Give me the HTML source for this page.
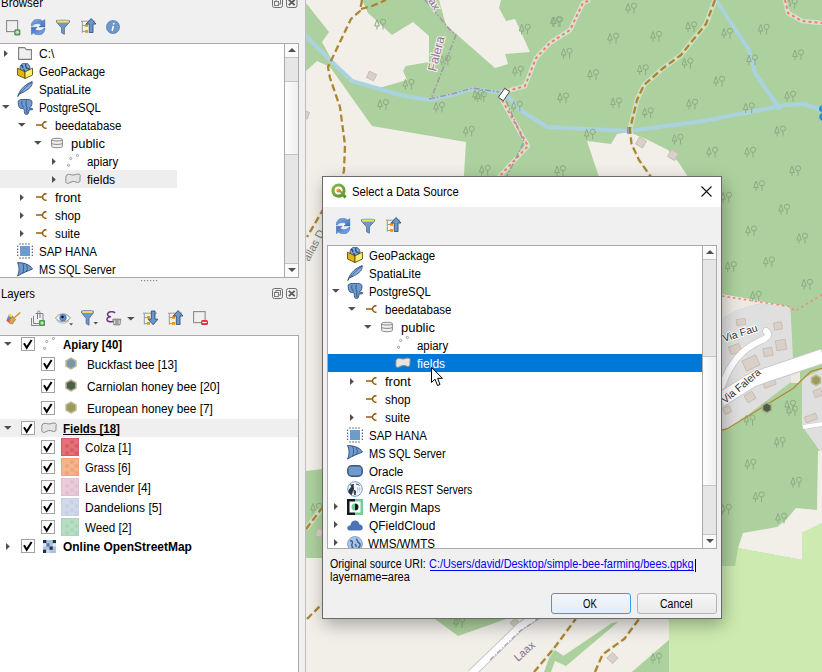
<!DOCTYPE html>
<html><head><meta charset="utf-8">
<style>
*{box-sizing:border-box}
html,body{margin:0;padding:0}
body{width:822px;height:672px;overflow:hidden;position:relative;background:#f0f0f0;font-family:"Liberation Sans",sans-serif;font-size:12px;color:#000}
.a{position:absolute}
.t{position:absolute;white-space:pre;line-height:18px;height:18px;transform-origin:0 0}
svg{position:absolute;overflow:visible}
</style></head><body>

<svg width="0" height="0" style="position:absolute;left:0;top:0">
<defs>
<symbol id="tr" viewBox="0 0 4 7"><path d="M0,0 L3.8,3.5 L0,7 Z" fill="#4f4f4f"/></symbol>
<symbol id="td" viewBox="0 0 8 4"><path d="M0,0 L7.6,0 L3.8,3.8 Z" fill="#4f4f4f"/></symbol>

<symbol id="folder" viewBox="0 0 14 13"><path d="M0.6,0.6 H6.6 L8.4,2.6 H13.4 V12.4 H0.6 Z" fill="#efefef" stroke="#7c7c7c" stroke-width="1.1" stroke-linejoin="round"/></symbol>

<symbol id="gpkg" viewBox="0 0 16 16">
<circle cx="8" cy="5" r="5" fill="#7ea6d6" stroke="#2f4f7a" stroke-width="0.8"/>
<path d="M3.8,2.8 C5.5,2 6.5,4 5.3,5.2 M8.5,0.8 C9.2,2.5 8,3.5 9.5,5 C10.5,6 11.8,5.6 12.6,6.5 M6,6.8 C7,6.3 8,7 7.6,8.5" fill="none" stroke="#2e4d78" stroke-width="1.4"/>
<path d="M0.5,5.2 L8,8.8 L8,15.5 L0.5,12 Z" fill="#e4b60c" stroke="#4e3e00" stroke-width="0.8" stroke-linejoin="round"/>
<path d="M8,8.8 L15.5,5.2 L15.5,12 L8,15.5 Z" fill="#f8f06c" stroke="#4e3e00" stroke-width="0.8" stroke-linejoin="round"/>
</symbol>

<symbol id="feather" viewBox="0 0 16 16">
<path d="M0.8,15.6 C2,11 5.5,4.5 15.2,0.6 C15.4,3.5 14.5,5.5 12,7.5 C9,10 6,11.5 2.5,12.8 Z" fill="#86aee0" stroke="#2f4d76" stroke-width="0.9" stroke-linejoin="round"/>
<path d="M2.5,12.8 C6,9 10,5 15,1" fill="none" stroke="#2f4d76" stroke-width="0.8"/>
</symbol>

<symbol id="pg" viewBox="0 0 16 16">
<path d="M1.2,3.5 C1,1 3,0.4 5.5,0.5 L10.5,0.5 C13,0.4 15.2,1 15,3.8 C14.8,6.5 14,8 12.5,8.6 L12.4,9.2 L15.4,9.4 L15.4,10.8 L12.2,10.8 C12,13 11.4,15.6 9.5,15.6 C7.6,15.6 7.2,13 7.3,10.8 C6.5,9.5 5.5,9.3 4.2,9.4 C2,9.3 1.4,6.5 1.2,3.5 Z" fill="#6f9bd2" stroke="#2f4f78" stroke-width="0.9" stroke-linejoin="round"/>
<path d="M5.2,1.8 C4.2,3.5 4.5,6.5 6.8,8.6 M9.4,1.6 C8.8,4 8.6,6 10,8.2 C9.6,10 9.6,12 10,14.5" fill="none" stroke="#2f4f78" stroke-width="0.9"/>
</symbol>

<symbol id="schema" viewBox="0 0 11 8"><path d="M0,4 H6 M10.5,0.6 C8.5,0.6 6.5,2 6.5,4 C6.5,6 8.5,7.4 10.5,7.4" fill="none" stroke="#9b5c0c" stroke-width="1.6"/></symbol>

<symbol id="db" viewBox="0 0 12 12">
<path d="M0.6,2.6 C0.6,0.8 11.4,0.8 11.4,2.6 V9.4 C11.4,11.2 0.6,11.2 0.6,9.4 Z" fill="#f0f0f0" stroke="#8a8a8a" stroke-width="1"/>
<path d="M0.6,2.8 C0.6,4.4 11.4,4.4 11.4,2.8 M0.6,6.2 C0.6,7.8 11.4,7.8 11.4,6.2" fill="none" stroke="#8a8a8a" stroke-width="1"/>
</symbol>

<symbol id="pts" viewBox="0 0 12 13"><g fill="#fff" stroke="#8a8a8a" stroke-width="0.8"><circle cx="1.6" cy="11.3" r="1.1"/><circle cx="3.7" cy="4.5" r="1.1"/><circle cx="10.4" cy="1.5" r="1.1"/></g></symbol>

<symbol id="poly" viewBox="0 0 16 11"><path d="M1.8,2 C3.5,0.4 6,2 8,2 C10,2 12.5,0.2 14.6,1.4 C16,2.4 14.6,4.6 15,7 C15.4,9.4 13.2,10.2 11,9 C9,8 6.5,8.6 4.2,10 C1.6,11.2 0.4,9.4 0.8,7.2 C1.2,5 0.2,3.4 1.8,2 Z" fill="#e4e4e4" stroke="#888" stroke-width="1"/></symbol>

<symbol id="hana" viewBox="0 0 16 16">
<rect x="3" y="3" width="10" height="10" fill="#6d9bcb"/>
<g fill="#2d4868"><circle cx="3" cy="1" r=".7"/><circle cx="6" cy="1" r=".7"/><circle cx="9" cy="1" r=".7"/><circle cx="12" cy="1" r=".7"/>
<circle cx="3" cy="15" r=".7"/><circle cx="6" cy="15" r=".7"/><circle cx="9" cy="15" r=".7"/><circle cx="12" cy="15" r=".7"/>
<circle cx="0.7" cy="3.3" r=".7"/><circle cx="0.7" cy="6.3" r=".7"/><circle cx="0.7" cy="9.3" r=".7"/><circle cx="0.7" cy="12.3" r=".7"/>
<circle cx="15.3" cy="3.3" r=".7"/><circle cx="15.3" cy="6.3" r=".7"/><circle cx="15.3" cy="9.3" r=".7"/><circle cx="15.3" cy="12.3" r=".7"/></g>
</symbol>

<symbol id="mssql" viewBox="0 0 16 15">
<path d="M0.5,0.6 C6,0.4 13,2.5 15.5,7 C11,9 5,11 0.5,14 C2.5,10 2.5,4.5 0.5,0.6 Z" fill="#6f9bd0" stroke="#2f4d76" stroke-width="0.9" stroke-linejoin="round"/>
<path d="M5.5,1.2 C7,4 7,8 5.5,11.5 M9.5,2.5 C10.5,5 10.5,7 9.5,9.5" fill="none" stroke="#2f4d76" stroke-width="0.8"/>
</symbol>

<symbol id="oracle" viewBox="0 0 16 12"><rect x="0.8" y="0.8" width="14.4" height="10.4" rx="4" fill="#6d9bcb" stroke="#38577c" stroke-width="1.5"/></symbol>

<symbol id="arcgis" viewBox="0 0 16 16">
<circle cx="8" cy="8" r="7.3" fill="#f4f8fc" stroke="#5c8fd0" stroke-width="0.9"/>
<path d="M3,4 C4,3.5 5,4.5 4.5,6 L2,9 C1.5,11 2.5,13 4.5,13.5 C5,11 6.5,10 6.5,8 C7,6 5.5,5 6.5,3 M7.5,9 C8.5,10 9,11.5 8,14 C7,12.5 7,11 7.5,9 M9,3 C10.5,3.5 11,3 12.5,4.5" fill="#2b3340" stroke="#2b3340" stroke-width="0.9"/>
<path d="M10.5,6 V12 M12.5,6 V11 M10,8 H14" stroke="#9db8e0" stroke-width="0.6"/>
</symbol>

<symbol id="mergin" viewBox="0 0 16 16">
<path d="M8,0 H0 V16 H8 V13.5 H2.5 V2.5 H8 Z" fill="#12181f"/>
<path d="M8,0 H16 V16 H8 V13.5 H13.5 V2.5 H8 Z" fill="#6fcf97"/>
<path d="M8,4.5 A3.5,3.5 0 0 0 8,11.5 Z" fill="#6fcf97"/>
<path d="M8,4.5 A3.5,3.5 0 0 1 8,11.5 Z" fill="#12181f"/>
</symbol>

<symbol id="cloud" viewBox="0 0 16 11"><path d="M3,10.6 C0.6,10.6 0,8.6 0.4,7.4 C0.9,5.8 2.2,5.3 3.4,5.5 C3.6,2.2 6,0.3 8.4,0.4 C10.8,0.5 12.3,2.4 12.6,4.6 C14.6,4.7 15.8,6.2 15.8,7.8 C15.8,9.6 14.4,10.6 12.8,10.6 Z" fill="#4a73b9"/></symbol>

<symbol id="wms" viewBox="0 0 16 16">
<circle cx="8" cy="8" r="7.5" fill="#a9c5e8" stroke="#5a7fae" stroke-width="0.6"/>
<path d="M3,5 C5,4 6,6 5,8 C4,10 6,12 7,14 M9,3 C11,4 10,6 12,7 C14,8 13,11 11,12 M8,8 C9,9 9.5,10 9,11" fill="none" stroke="#3b5f8e" stroke-width="1.4"/>
</symbol>

<symbol id="chk" viewBox="0 0 14 14">
<rect x="0.5" y="0.5" width="13" height="13" fill="#fff" stroke="#a3a3a3" stroke-width="1"/>
<path d="M3,6.3 L5.7,10.8 L10.6,3" fill="none" stroke="#000" stroke-width="2" stroke-linejoin="miter"/>
</symbol>

<symbol id="hex" viewBox="0 0 12 13"><path d="M6,0.3 L11.7,3.4 L11.7,9.6 L6,12.7 L0.3,9.6 L0.3,3.4 Z"/></symbol>

<symbol id="osm" viewBox="0 0 13 13">
<rect width="13" height="13" fill="#a9c3e0"/>
<rect x="0" y="0" width="3.25" height="3.25" fill="#1f3247"/><rect x="9.75" y="0" width="3.25" height="3.25" fill="#1f3247"/>
<rect x="3.25" y="3.25" width="3.25" height="3.25" fill="#5c7896"/><rect x="6.5" y="6.5" width="3.25" height="3.25" fill="#1f3247"/>
<rect x="0" y="9.75" width="3.25" height="3.25" fill="#1f3247"/><rect x="3.25" y="9.75" width="3.25" height="3.25" fill="#cfdcec"/>
<rect x="9.75" y="3.25" width="3.25" height="3.25" fill="#dde7f2"/><rect x="0" y="3.25" width="3.25" height="3.25" fill="#dde7f2"/>
</symbol>

<symbol id="refresh" viewBox="0 0 15 16">
<defs><linearGradient id="rg1" x1="0" y1="0" x2="1" y2="1"><stop offset="0" stop-color="#86b0e4"/><stop offset="1" stop-color="#3c6fc2"/></linearGradient></defs>
<path d="M0.2,7 C0.4,3 3,0.2 6.5,0.2 C9,0.2 10.6,1 11.6,2.1 L13.8,0.6 L13.9,7.9 L8,7.9 L10.1,5.9 C9.2,5 8,4.5 6.5,4.5 C4,4.5 2.4,5.6 1.2,7 Z" fill="url(#rg1)" stroke="#3a68b0" stroke-width="0.5"/>
<path d="M0.2,7 C0.4,3 3,0.2 6.5,0.2 C9,0.2 10.6,1 11.6,2.1 L13.8,0.6 L13.9,7.9 L8,7.9 L10.1,5.9 C9.2,5 8,4.5 6.5,4.5 C4,4.5 2.4,5.6 1.2,7 Z" fill="url(#rg1)" stroke="#3a68b0" stroke-width="0.5" transform="rotate(180 7.1 8.1)"/>
</symbol>

<symbol id="funnel" viewBox="0 0 15 16">
<path d="M0.6,1.2 C0.6,0.6 14.4,0.6 14.4,1.2 L14.4,2.8 L9,9 L9,15.8 L6,14.2 L6,9 L0.6,2.8 Z" fill="#6f97c7" stroke="#44648c" stroke-width="0.8" stroke-linejoin="round"/>
<rect x="1.2" y="1" width="12.6" height="2.3" fill="#f4e35a"/>
</symbol>

<symbol id="collapse" viewBox="0 0 16 16">
<path d="M1,4.2 H15 M2.3,4.2 V15.7 M2.3,8.5 H5 M2.3,14.5 H5" fill="none" stroke="#8f8f8f" stroke-width="0.9"/>
<rect x="5" y="7" width="3" height="2.8" fill="#f39412"/><rect x="5" y="13" width="3" height="2.8" fill="#f39412"/>
<path d="M11.1,1.5 L16,7 L13,7 L13,15.7 L9.3,15.7 L9.3,7 L6.2,7 Z" fill="#6d97c8" stroke="#2f4e78" stroke-width="0.9" stroke-linejoin="round"/>
</symbol>
<symbol id="expand" viewBox="0 0 16 16">
<path d="M1,4.2 H15 M2.3,4.2 V15.7 M2.3,8.5 H5 M2.3,14.5 H5" fill="none" stroke="#8f8f8f" stroke-width="0.9"/>
<rect x="5" y="7" width="3" height="2.8" fill="#f39412"/><rect x="5" y="13" width="3" height="2.8" fill="#f39412"/>
<path d="M11.1,15.7 L16,10.2 L13,10.2 L13,2 L9.3,2 L9.3,10.2 L6.2,10.2 Z" fill="#6d97c8" stroke="#2f4e78" stroke-width="0.9" stroke-linejoin="round"/>
</symbol>

<symbol id="addsel" viewBox="0 0 15 16">
<rect x="0.6" y="0.6" width="11" height="11" fill="none" stroke="#8a8a8a" stroke-width="1.1"/>
<rect x="8.2" y="9.2" width="6.2" height="6.2" rx="1.5" fill="#4c9a4c"/><circle cx="11.3" cy="12.3" r="1.8" fill="#c8dcc8"/>
</symbol>
<symbol id="remove" viewBox="0 0 15 14">
<rect x="0.6" y="0.6" width="11.5" height="11" fill="none" stroke="#8a8a8a" stroke-width="1.1"/>
<rect x="8" y="9" width="7" height="5" rx="1.5" fill="#e3303c"/><rect x="9.3" y="10.9" width="4.4" height="1.2" fill="#fff"/>
</symbol>
<symbol id="info" viewBox="0 0 14 14">
<circle cx="7" cy="7" r="6.6" fill="#6b97c9" stroke="#4f79aa" stroke-width="0.6"/>
<path d="M7.3,5.8 L6.2,11" stroke="#fff" stroke-width="1.5"/><circle cx="7.7" cy="3.7" r="0.9" fill="#fff"/>
</symbol>

<symbol id="brush" viewBox="0 0 15 13">
<path d="M0.3,9 L3.2,2 L6,3.5 L3,10.5 Z" fill="#e84a4a"/>
<path d="M1.2,6.5 L3.2,2 L7,4 L5,8 Z" fill="#5f8fd0"/>
<path d="M2.2,4 L3.2,1.6 L7,3.5 L6,5.5 Z" fill="#f3de3a"/>
<path d="M3.5,7 L7,4.5 L9.5,7.5 L6.5,12 L3,11 Z" fill="#d6a45a" stroke="#9a6a28" stroke-width="0.6"/>
<path d="M8,6 L14.3,0.5" stroke="#d49a3a" stroke-width="1.6"/>
</symbol>

<symbol id="addgrp" viewBox="0 0 14 16">
<path d="M0.5,8 V15.5 H8 M2.5,6 V13.5 H10 M4.5,3.5 H12 V11.5" fill="none" stroke="#777" stroke-width="0.9"/>
<path d="M6.5,9 V2.5 C6.5,0.5 9,0.5 9,2.5 V8" fill="none" stroke="#5a86c0" stroke-width="1"/>
<rect x="8" y="10" width="6" height="6" rx="1" fill="#4c9a4c"/><circle cx="11" cy="13" r="1.7" fill="#c8dcc8"/>
</symbol>

<symbol id="eye" viewBox="0 0 18 14">
<path d="M0.6,6 C4,0.5 12,0.5 15.4,6 C12,11 4,11 0.6,6 Z" fill="#f3f3f3" stroke="#8c8c8c" stroke-width="0.9"/>
<path d="M1.5,8.5 C5,12 11,12 14,9" fill="none" stroke="#b0b0b0" stroke-width="0.8"/>
<circle cx="8" cy="5.7" r="3.3" fill="#5f8ecf" stroke="#3b5f90" stroke-width="0.6"/><circle cx="7.5" cy="5" r="1.2" fill="#000"/>
<path d="M14.2,11.2 H18 L16.1,13.5 Z" fill="#4f4f4f"/>
</symbol>
<symbol id="funneldd" viewBox="0 0 17 16">
<path d="M0.6,1.2 C0.6,0.6 12.4,0.6 12.4,1.2 L12.4,2.8 L8,8.5 L8,15.2 L5.2,13.6 L5.2,8.5 L0.6,2.8 Z" fill="#6f97c7" stroke="#44648c" stroke-width="0.8" stroke-linejoin="round"/>
<rect x="1.3" y="1.1" width="10.4" height="1.8" fill="#f4e35a"/>
<path d="M12.5,12 H17 L14.75,14.4 Z" fill="#4f4f4f"/>
</symbol>
<symbol id="eps" viewBox="0 0 16 15">
<path d="M8.6,1.6 C7.6,0.4 2.2,0.2 1.6,3 C1.3,4.6 2.6,5.6 5,5.7 C2.4,5.8 0.8,6.8 1,8.6 C1.3,11.2 6.6,11.4 8.8,9.6" fill="none" stroke="#6b3b7e" stroke-width="1.5" stroke-linecap="round"/>
<path d="M6.8,8 H15 L14,14 H7.8 Z" fill="#a0a0a0" stroke="#7a7a7a" stroke-width="0.6"/>
<path d="M8.6,9.5 V13 M13.2,9.5 V13" stroke="#dcdcdc" stroke-width="1"/>
</symbol>

<symbol id="qgis" viewBox="0 0 16 16">
<defs><linearGradient id="qg" x1="0" y1="0" x2="1" y2="1"><stop offset="0" stop-color="#8cc051"/><stop offset="1" stop-color="#4f8a22"/></linearGradient>
<radialGradient id="qo" cx="0.4" cy="0.4" r="0.6"><stop offset="0" stop-color="#ffb347"/><stop offset="1" stop-color="#e8620c"/></radialGradient></defs>
<path d="M7.6,0.4 A7.2,7.2 0 1 0 11.6,13.6 L13.6,15.6 L15.6,13.6 L13.4,11.4 A7.2,7.2 0 0 0 7.6,0.4 Z M7.6,3.6 A4,4 0 1 1 7.6,11.6 A4,4 0 1 1 7.6,3.6 Z" fill="url(#qg)" fill-rule="evenodd"/>
<path d="M7.2,7.8 L13.2,14 L14.8,12.6 L9,6.6 Z" fill="url(#qg)"/>
<circle cx="7.4" cy="7.4" r="2" fill="url(#qo)"/>
</symbol>
</defs></svg>

<svg id="map" class="a" style="left:0;top:0" width="822" height="672" viewBox="0 0 822 672">
<rect x="306" y="0" width="516" height="672" fill="#add19e"/>
<g fill="#f2efe9">
<polygon fill="#f2efe9" points="306,0 362,0 368,13 392,35 413,22 429,36 429,62 406,66 403,71 407,80 379,88 352,80 333,62 322,42 329,32 306,3" />
<polygon fill="#f2efe9" points="306,71 317,61 330,67 372,126 466,142 463,190 322,200 306,200" />
<polygon fill="#f2efe9" points="439,0 501,0 499,8 506,21 515,19 530,52 505,54 508,64 495,68 446,25" />
<polygon fill="#f2efe9" points="587,141 611,144 617,134 629,132 648,140 668,150 679,163 690,180 600,180" />
<polygon fill="#f2efe9" points="306,190 330,190 330,468 306,471" />
<polygon fill="#f2efe9" points="306,558 330,558 330,672 306,672" />
<polygon fill="#f2efe9" points="320,612 680,612 669,640 632,672 320,672" />
<polygon fill="#ece9e3" points="722,294 789,306.5 791,314 786,306.5 759.5,303.6 738.7,309.5 722,318.5" />
<polygon fill="#f2efe9" points="818,451 822,451 822,523 802,533 802,560 738,548 743,533 777,527 786,520 796,508 817,510" />
</g>
<polygon fill="#e0dfdf" points="722,318.5 738.7,309.5 759.5,303.6 786.4,306.5 790.8,314 793,359 791,382 741,420 722,430" />
<polygon fill="#e0dfdf" points="802,379 822,369 822,451 820,451 802,426" />
<polygon fill="#add19e" points="739,420 793,388 802,379 800,420" />
<polygon fill="#e0dfdf" points="722,430 727,430 758,410 741,420" />
<polygon fill="#ece9e2" points="791,369 800,367 800,383 791,383" />
<polygon fill="#cdebb0" points="738,548 802,560 802,533 822,523 822,672 632,672 669,640 669,612 722,612 722,566 735,566" />
<polygon fill="#add19e" points="632,672 669,640 669,672" />
<polygon fill="#add19e" points="544,672 552.6,648.5 563.5,655.8 612,623 618,622 566,666 555,661 551,672" />
<polygon fill="#add19e" points="435,619 506,619 458,636" />
<g fill="#d9d0c9" stroke="#c6b8ac" stroke-width="0.8">
<rect x="367.5" y="72.5" width="8" height="7" transform="rotate(25 371.5 76)"/>
<rect x="303.5" y="111.5" width="5" height="7" transform="rotate(20 306 115)"/>
<rect x="637.0" y="138.5" width="8" height="8" transform="rotate(30 641 142.5)"/>
<rect x="669.0" y="151.0" width="8" height="8" transform="rotate(30 673 155)"/>
<rect x="608.5" y="654.0" width="8" height="8" transform="rotate(45 612.5 658)"/>
<rect x="511.5" y="619.5" width="7" height="7" transform="rotate(45 515 623)"/>
<rect x="316.5" y="529.0" width="6" height="8" transform="rotate(20 319.5 533)"/>
<rect x="736.5" y="319.0" width="9" height="6" transform="rotate(-8 741 322)"/>
<rect x="774.0" y="322.5" width="8" height="7" transform="rotate(-10 778 326)"/>
<rect x="729.5" y="345.0" width="11" height="8" transform="rotate(-20 735 349)"/>
<rect x="743.5" y="357.5" width="15" height="11" transform="rotate(-25 751 363)"/>
<rect x="763.5" y="348.0" width="9" height="8" transform="rotate(-10 768 352)"/>
<rect x="776.0" y="340.0" width="10" height="10" transform="rotate(-8 781 345)"/>
<rect x="733.0" y="385.5" width="8" height="7" transform="rotate(-30 737 389)"/>
<rect x="763.0" y="377.5" width="12" height="9" transform="rotate(-20 769 382)"/>
<rect x="745.5" y="393.0" width="9" height="8" transform="rotate(-30 750 397)"/>
<rect x="723.5" y="406.5" width="7" height="7" transform="rotate(-25 727 410)"/>
<rect x="814.0" y="389.5" width="8" height="7" transform="rotate(-20 818 393)"/>
<rect x="805.0" y="415.0" width="12" height="6" transform="rotate(-20 811 418)"/>
</g>
<g fill="none" stroke="#aad3df" stroke-width="4.2" stroke-linejoin="round" stroke-linecap="round">
<polyline points="306,36 333,63 352,81 400,95 429,100 452,95 472,89 505,93 520,110 547,127 629,131 704,121 745,113 786,105 804,104 822,110"/>
<polyline points="716,0 749,50 755,73 779,108" stroke-width="4"/>
</g>
<g fill="none" stroke="#8dab83" stroke-width="1.0">
<path d="M625.7,10.0 L628.0,3.5 L630.3,10.0 Z M628.0,10.0 V13.5 M634.0,8.1 V13.5"/><circle cx="634.0" cy="5.8" r="2.6"/>
<path d="M551.7,23.5 L554.0,17.0 L556.3,23.5 Z M554.0,23.5 V27.0 M560.0,21.6 V27.0"/><circle cx="560.0" cy="19.3" r="2.6"/>
<path d="M607.7,40.0 L610.0,33.5 L612.3,40.0 Z M610.0,40.0 V43.5 M616.0,38.1 V43.5"/><circle cx="616.0" cy="35.8" r="2.6"/>
<path d="M650.7,38.0 L653.0,31.5 L655.3,38.0 Z M653.0,38.0 V41.5 M659.0,36.1 V41.5"/><circle cx="659.0" cy="33.8" r="2.6"/>
<path d="M685.7,28.5 L688.0,22.0 L690.3,28.5 Z M688.0,28.5 V32.0 M694.0,26.6 V32.0"/><circle cx="694.0" cy="24.3" r="2.6"/>
<path d="M721.7,35.0 L724.0,28.5 L726.3,35.0 Z M724.0,35.0 V38.5 M730.0,33.1 V38.5"/><circle cx="730.0" cy="30.8" r="2.6"/>
<path d="M758.3,31.0 L760.6,24.5 L762.9,31.0 Z M760.6,31.0 V34.5 M766.6,29.1 V34.5"/><circle cx="766.6" cy="26.8" r="2.6"/>
<path d="M792.7,56.6 L795.0,50.1 L797.3,56.6 Z M795.0,56.6 V60.1 M801.0,54.7 V60.1"/><circle cx="801.0" cy="52.4" r="2.6"/>
<path d="M561.3,55.0 L563.6,48.5 L565.9,55.0 Z M563.6,55.0 V58.5 M569.6,53.1 V58.5"/><circle cx="569.6" cy="50.8" r="2.6"/>
<path d="M637.4,71.5 L639.7,65.0 L642.0,71.5 Z M639.7,71.5 V75.0 M645.7,69.6 V75.0"/><circle cx="645.7" cy="67.3" r="2.6"/>
<path d="M682.1,65.0 L684.4,58.5 L686.7,65.0 Z M684.4,65.0 V68.5 M690.4,63.1 V68.5"/><circle cx="690.4" cy="60.8" r="2.6"/>
<path d="M746.7,61.6 L749.0,55.1 L751.3,61.6 Z M749.0,61.6 V65.1 M755.0,59.7 V65.1"/><circle cx="755.0" cy="57.4" r="2.6"/>
<path d="M587.7,76.5 L590.0,70.0 L592.3,76.5 Z M590.0,76.5 V80.0 M596.0,74.6 V80.0"/><circle cx="596.0" cy="72.3" r="2.6"/>
<path d="M713.7,83.0 L716.0,76.5 L718.3,83.0 Z M716.0,83.0 V86.5 M722.0,81.1 V86.5"/><circle cx="722.0" cy="78.8" r="2.6"/>
<path d="M784.7,98.0 L787.0,91.5 L789.3,98.0 Z M787.0,98.0 V101.5 M793.0,96.1 V101.5"/><circle cx="793.0" cy="93.8" r="2.6"/>
<path d="M557.7,99.7 L560.0,93.2 L562.3,99.7 Z M560.0,99.7 V103.2 M566.0,97.8 V103.2"/><circle cx="566.0" cy="95.5" r="2.6"/>
<path d="M610.7,104.6 L613.0,98.1 L615.3,104.6 Z M613.0,104.6 V108.1 M619.0,102.7 V108.1"/><circle cx="619.0" cy="100.4" r="2.6"/>
<path d="M686.7,106.0 L689.0,99.5 L691.3,106.0 Z M689.0,106.0 V109.5 M695.0,104.1 V109.5"/><circle cx="695.0" cy="101.8" r="2.6"/>
<path d="M743.4,109.6 L745.7,103.1 L748.0,109.6 Z M745.7,109.6 V113.1 M751.7,107.7 V113.1"/><circle cx="751.7" cy="105.4" r="2.6"/>
<path d="M642.4,114.6 L644.7,108.1 L647.0,114.6 Z M644.7,114.6 V118.1 M650.7,112.7 V118.1"/><circle cx="650.7" cy="110.4" r="2.6"/>
<path d="M584.4,136.0 L586.7,129.5 L589.0,136.0 Z M586.7,136.0 V139.5 M592.7,134.1 V139.5"/><circle cx="592.7" cy="131.8" r="2.6"/>
<path d="M672.2,141.0 L674.5,134.5 L676.8,141.0 Z M674.5,141.0 V144.5 M680.5,139.1 V144.5"/><circle cx="680.5" cy="136.8" r="2.6"/>
<path d="M774.7,132.8 L777.0,126.3 L779.3,132.8 Z M777.0,132.8 V136.3 M783.0,130.9 V136.3"/><circle cx="783.0" cy="128.6" r="2.6"/>
<path d="M706.7,154.0 L709.0,147.5 L711.3,154.0 Z M709.0,154.0 V157.5 M715.0,152.1 V157.5"/><circle cx="715.0" cy="149.8" r="2.6"/>
<path d="M744.7,154.0 L747.0,147.5 L749.3,154.0 Z M747.0,154.0 V157.5 M753.0,152.1 V157.5"/><circle cx="753.0" cy="149.8" r="2.6"/>
<path d="M554.7,172.5 L557.0,166.0 L559.3,172.5 Z M557.0,172.5 V176.0 M563.0,170.6 V176.0"/><circle cx="563.0" cy="168.3" r="2.6"/>
<path d="M789.7,172.5 L792.0,166.0 L794.3,172.5 Z M792.0,172.5 V176.0 M798.0,170.6 V176.0"/><circle cx="798.0" cy="168.3" r="2.6"/>
<path d="M786.4,5.3 L788.7,-1.2 L791.0,5.3 Z M788.7,5.3 V8.8 M794.7,3.4 V8.8"/><circle cx="794.7" cy="1.1" r="2.6"/>
<path d="M374.7,26.0 L377.0,19.5 L379.3,26.0 Z M377.0,26.0 V29.5 M383.0,24.1 V29.5"/><circle cx="383.0" cy="21.8" r="2.6"/>
<path d="M403.1,86.0 L405.4,79.5 L407.7,86.0 Z M405.4,86.0 V89.5 M411.4,84.1 V89.5"/><circle cx="411.4" cy="81.8" r="2.6"/>
<path d="M377.7,106.4 L380.0,99.9 L382.3,106.4 Z M380.0,106.4 V109.9 M386.0,104.5 V109.9"/><circle cx="386.0" cy="102.2" r="2.6"/>
<path d="M433.7,109.0 L436.0,102.5 L438.3,109.0 Z M436.0,109.0 V112.5 M442.0,107.1 V112.5"/><circle cx="442.0" cy="104.8" r="2.6"/>
<path d="M463.4,133.0 L465.7,126.5 L468.0,133.0 Z M465.7,133.0 V136.5 M471.7,131.1 V136.5"/><circle cx="471.7" cy="128.8" r="2.6"/>
<path d="M479.4,172.0 L481.7,165.5 L484.0,172.0 Z M481.7,172.0 V175.5 M487.7,170.1 V175.5"/><circle cx="487.7" cy="167.8" r="2.6"/>
<path d="M472.7,97.0 L475.0,90.5 L477.3,97.0 Z M475.0,97.0 V100.5 M481.0,95.1 V100.5"/><circle cx="481.0" cy="92.8" r="2.6"/>
<path d="M439.5,62.0 L441.8,55.5 L444.1,62.0 Z M441.8,62.0 V65.5 M447.8,60.1 V65.5"/><circle cx="447.8" cy="57.8" r="2.6"/>
<path d="M519.3,31.0 L521.6,24.5 L523.9,31.0 Z M521.6,31.0 V34.5 M527.6,29.1 V34.5"/><circle cx="527.6" cy="26.8" r="2.6"/>
<path d="M550.4,23.4 L552.7,16.9 L555.0,23.4 Z M552.7,23.4 V26.9 M558.7,21.5 V26.9"/><circle cx="558.7" cy="19.2" r="2.6"/>
<path d="M512.5,73.0 L514.8,66.5 L517.1,73.0 Z M514.8,73.0 V76.5 M520.8,71.1 V76.5"/><circle cx="520.8" cy="68.8" r="2.6"/>
<path d="M475.5,98.4 L477.8,91.9 L480.1,98.4 Z M477.8,98.4 V101.9 M483.8,96.5 V101.9"/><circle cx="483.8" cy="94.2" r="2.6"/>
<path d="M511.5,108.0 L513.8,101.5 L516.1,108.0 Z M513.8,108.0 V111.5 M519.8,106.1 V111.5"/><circle cx="519.8" cy="103.8" r="2.6"/>
<path d="M753.7,187.5 L756.0,181.0 L758.3,187.5 Z M756.0,187.5 V191.0 M762.0,185.6 V191.0"/><circle cx="762.0" cy="183.3" r="2.6"/>
<path d="M720.7,199.0 L723.0,192.5 L725.3,199.0 Z M723.0,199.0 V202.5 M729.0,197.1 V202.5"/><circle cx="729.0" cy="194.8" r="2.6"/>
<path d="M778.7,211.0 L781.0,204.5 L783.3,211.0 Z M781.0,211.0 V214.5 M787.0,209.1 V214.5"/><circle cx="787.0" cy="206.8" r="2.6"/>
<path d="M745.7,232.7 L748.0,226.2 L750.3,232.7 Z M748.0,232.7 V236.2 M754.0,230.8 V236.2"/><circle cx="754.0" cy="228.5" r="2.6"/>
<path d="M796.7,240.0 L799.0,233.5 L801.3,240.0 Z M799.0,240.0 V243.5 M805.0,238.1 V243.5"/><circle cx="805.0" cy="235.8" r="2.6"/>
<path d="M763.5,263.7 L765.8,257.2 L768.1,263.7 Z M765.8,263.7 V267.2 M771.8,261.8 V267.2"/><circle cx="771.8" cy="259.5" r="2.6"/>
<path d="M725.4,268.4 L727.7,261.9 L730.0,268.4 Z M727.7,268.4 V271.9 M733.7,266.5 V271.9"/><circle cx="733.7" cy="264.2" r="2.6"/>
<path d="M801.7,286.0 L804.0,279.5 L806.3,286.0 Z M804.0,286.0 V289.5 M810.0,284.1 V289.5"/><circle cx="810.0" cy="281.8" r="2.6"/>
<path d="M750.4,298.0 L752.7,291.5 L755.0,298.0 Z M752.7,298.0 V301.5 M758.7,296.1 V301.5"/><circle cx="758.7" cy="293.8" r="2.6"/>
<path d="M784.7,407.0 L787.0,400.5 L789.3,407.0 Z M787.0,407.0 V410.5 M793.0,405.1 V410.5"/><circle cx="793.0" cy="402.8" r="2.6"/>
<path d="M774.4,444.0 L776.7,437.5 L779.0,444.0 Z M776.7,444.0 V447.5 M782.7,442.1 V447.5"/><circle cx="782.7" cy="439.8" r="2.6"/>
<path d="M745.0,466.0 L747.3,459.5 L749.6,466.0 Z M747.3,466.0 V469.5 M753.3,464.1 V469.5"/><circle cx="753.3" cy="461.8" r="2.6"/>
<path d="M790.7,484.0 L793.0,477.5 L795.3,484.0 Z M793.0,484.0 V487.5 M799.0,482.1 V487.5"/><circle cx="799.0" cy="479.8" r="2.6"/>
<path d="M753.2,498.7 L755.5,492.2 L757.8,498.7 Z M755.5,498.7 V502.2 M761.5,496.8 V502.2"/><circle cx="761.5" cy="494.5" r="2.6"/>
<path d="M720.4,511.0 L722.7,504.5 L725.0,511.0 Z M722.7,511.0 V514.5 M728.7,509.1 V514.5"/><circle cx="728.7" cy="506.8" r="2.6"/>
<path d="M744.2,421.8 L746.5,415.3 L748.8,421.8 Z M746.5,421.8 V425.3 M752.5,419.9 V425.3"/><circle cx="752.5" cy="417.6" r="2.6"/>
<path d="M786.7,412.8 L789.0,406.3 L791.3,412.8 Z M789.0,412.8 V416.3 M795.0,410.9 V416.3"/><circle cx="795.0" cy="408.6" r="2.6"/>
<path d="M775.7,520.0 L778.0,513.5 L780.3,520.0 Z M778.0,520.0 V523.5 M784.0,518.1 V523.5"/><circle cx="784.0" cy="515.8" r="2.6"/>
<path d="M310.7,510.0 L313.0,503.5 L315.3,510.0 Z M313.0,510.0 V513.5 M319.0,508.1 V513.5"/><circle cx="319.0" cy="505.8" r="2.6"/>
<path d="M650.7,660.0 L653.0,653.5 L655.3,660.0 Z M653.0,660.0 V663.5 M659.0,658.1 V663.5"/><circle cx="659.0" cy="655.8" r="2.6"/>
<path d="M453.7,624.0 L456.0,617.5 L458.3,624.0 Z M456.0,624.0 V627.5 M462.0,622.1 V627.5"/><circle cx="462.0" cy="619.8" r="2.6"/>
</g>
<polyline fill="none" stroke="#c8c8c8" stroke-width="15.5" points="721,399.5 753,379.5 823,356"/>
<polyline fill="none" stroke="#fff" stroke-width="13.5" points="721,399.5 753,379.5 823,356"/>
<path fill="none" stroke="#c8c8c8" stroke-width="7.5" stroke-linecap="round" d="M722,386 C730,362 744,348 760,341 C768,338 770,334 766,331"/>
<path fill="none" stroke="#fff" stroke-width="6" stroke-linecap="round" d="M722,386 C730,362 744,348 760,341 C768,338 770,334 766,331"/>
<polyline fill="none" stroke="#c8c8c8" stroke-width="5" points="803,427 822,424"/>
<polyline fill="none" stroke="#fff" stroke-width="4" points="803,427 822,424"/>
<polyline fill="none" stroke="#b08a30" stroke-width="1.3" points="722,430 727,429 758,410 793,388.5 811,371.3 822,368.4"/>
<polyline fill="none" stroke="#c8c8c8" stroke-width="9" points="471,674 520,626.6 553,605"/>
<polyline fill="none" stroke="#fff" stroke-width="7" points="471,674 520,626.6 553,605"/>
<polyline fill="none" stroke="#b49ab4" stroke-width="1.2" stroke-dasharray="5,2,1,2" points="490,660 520,631 550,611"/>
<g fill="none" stroke="#e9eddf" stroke-opacity="0.55" stroke-width="5" stroke-linejoin="round">
<polyline points="715,0 712,8 706,24 695,37.5 681,55 662,69 644,85 637,100 630,129 631.5,144 639,160 651,177"/>
<polyline points="324,208 307,237"/>
<polyline points="306,529 322,508"/>
<polyline points="307,619 322,604"/>
<polyline points="534,672 553.8,648.5 575.7,619"/>
<polyline points="595,672 602.5,654.6 624.4,638.8 639,619"/>
</g>
<g fill="none" stroke="#ac8433" stroke-width="2.3" stroke-dasharray="7,3.5" stroke-linejoin="round">
<polyline points="362,0 360,11 351,19 328,67 330,78 340,107 345,145 344,171 341,180"/>
<polyline points="361,9 372,6 386,0"/>
<polyline points="715,0 712,8 706,24 695,37.5 681,55 662,69 644,85 637,100 630,129 631.5,144 639,160 651,177"/>
<polyline points="324,208 307,237"/>
<polyline points="306,529 322,508"/>
<polyline points="307,619 322,604"/>
<polyline points="534,672 553.8,648.5 575.7,619"/>
<polyline points="595,672 602.5,654.6 624.4,638.8 639,619"/>
</g>
<g fill="none" stroke="#f2efe9" stroke-opacity="0.6" stroke-width="4.5" stroke-linejoin="round">
<polyline points="501,93 525,86 536,58 550,43 570,30 583,3 590,0"/>
<polyline points="785,0 788,13 802,21 822,23"/>
<polyline points="502,100 528,146 496,180"/>
</g>
<g fill="none" stroke="#f47b72" stroke-width="2" stroke-dasharray="3,3">
<polyline points="501,93 525,86 536,58 550,43 570,30 583,3 590,0"/>
<polyline points="785,0 788,13 802,21 822,23"/>
<polyline points="502,100 528,146 496,180"/>
<polyline points="722,296 789,306.5 795,311 822,294.6" stroke-width="1.6" stroke-dasharray="2.5,3" stroke="#f08a80"/>
</g>
<g fill="none" stroke="#a394a6" stroke-width="1.5" stroke-dasharray="6,2,1.5,2">
<polyline points="425,0 451,31 456,35 431,99"/>
<polyline points="429,99 452,94 472,88 499,92"/>
<polyline points="506,101 524,142 505,180"/>
</g>
<path d="M823,106 C819.5,107.5 819.5,110 822,111 M823,114 C819.5,115.5 819.5,118 823,120" fill="none" stroke="#1f8ad8" stroke-width="2.6"/>
<rect x="501" y="89" width="6" height="11" fill="#fff" stroke="#444" stroke-width="0.9" transform="rotate(35 504 94.5)"/>
<rect x="627" y="127" width="3" height="7" fill="#777" opacity="0.6"/>
<text font-family="Liberation Sans" font-size="12.5" fill="#94799a" stroke="#f2efe9" stroke-width="2.2" paint-order="stroke" transform="translate(436,72) rotate(-76)">Falera</text>
<text font-family="Liberation Sans" font-size="11" fill="#8a7190" stroke="#f2efe9" stroke-width="2.2" paint-order="stroke"  transform="translate(428,1) rotate(58)">ax</text>
<text font-family="Liberation Sans" font-size="11" fill="#7a7a7a" stroke="#f2efe9" stroke-width="2" paint-order="stroke" transform="translate(309,262) rotate(-62)">allas D</text>
<text font-family="Liberation Sans" font-size="11" fill="#8a7190" stroke="#f2efe9" stroke-width="2.2" paint-order="stroke"  transform="translate(518,662) rotate(-42)">Laax</text>
<text font-family="Liberation Sans" font-size="10.5" fill="#333" stroke="#fff" stroke-width="2" paint-order="stroke"  transform="translate(724,342) rotate(-18)">Via Fau</text>
<text font-family="Liberation Sans" font-size="10.5" fill="#333" stroke="#fff" stroke-width="2" paint-order="stroke"  transform="translate(725,404) rotate(-40) ">Via Falera</text>
<polygon points="766.9,401.8 772.1,404.8 772.1,410.8 766.9,413.8 761.7,410.8 761.7,404.8" fill="#aaae8a"/><polygon points="766.9,403.6 770.5,405.7 770.5,409.9 766.9,412.0 763.3,409.9 763.3,405.7" fill="#4d5e49"/>
<polygon points="816.0,374.3 821.2,377.3 821.2,383.3 816.0,386.3 810.8,383.3 810.8,377.3" fill="#bab98f"/><polygon points="816.0,376.1 819.6,378.2 819.6,382.4 816.0,384.5 812.4,382.4 812.4,378.2" fill="#9c9a5e"/>
</svg>
<div class="a" style="left:0;top:0;width:305px;height:672px;background:#f0f0f0"></div>
<div class="a" style="left:305px;top:0;width:1px;height:672px;background:#bdbdbd"></div>
<div class="t" style="left:1px;top:-6px;transform:scaleX(0.953)">Browser</div>
<svg class="a" style="left:272px;top:-3px" width="26" height="11" viewBox="0 0 26 11"><rect x="0.5" y="0.5" width="10" height="10" rx="2" fill="none" stroke="#6e6e6e"/><rect x="4" y="2.5" width="4.5" height="4.5" fill="none" stroke="#6e6e6e" stroke-width="0.9"/><rect x="2.5" y="4.5" width="4" height="4" fill="#f0f0f0" stroke="#6e6e6e" stroke-width="0.9"/><rect x="14.5" y="0.5" width="10.5" height="10" rx="2" fill="none" stroke="#6e6e6e"/><path d="M16.8,2.8 L22.7,8.2 M22.7,2.8 L16.8,8.2" stroke="#5a5a5a" stroke-width="1.8"/></svg>
<svg class="a" style="left:6px;top:20px" width="15" height="16" ><use href="#addsel" width="15" height="16"/></svg>
<svg class="a" style="left:31px;top:19px" width="15" height="16" ><use href="#refresh" width="15" height="16"/></svg>
<svg class="a" style="left:56px;top:19px" width="14" height="16" ><use href="#funnel" width="14" height="16"/></svg>
<svg class="a" style="left:80px;top:17px" width="16" height="16" ><use href="#collapse" width="16" height="16"/></svg>
<svg class="a" style="left:106px;top:20px" width="14" height="14" ><use href="#info" width="14" height="14"/></svg>
<div class="a" style="left:-1px;top:43px;width:300px;height:235px;background:#fff;border:1px solid #a9a9a9"></div>
<div class="a" style="left:284px;top:44px;width:14px;height:233px;background:#e6e6e6;border-left:1px solid #a9a9a9"></div><div class="a" style="left:285px;top:81px;width:13px;height:74px;background:linear-gradient(to right,#fdfdfd,#efefef);border-top:1px solid #c4c4c4;border-bottom:1px solid #c4c4c4"></div><div class="a" style="left:285px;top:44px;width:13px;height:14px;background:#fafafa;border-bottom:1px solid #c4c4c4"></div><svg class="a" style="left:287.5px;top:48px" width="8" height="4"><path d="M0,4 L4,0 L8,4 Z" fill="#505050"/></svg><div class="a" style="left:285px;top:263px;width:13px;height:14px;background:#fafafa;border-top:1px solid #c4c4c4"></div><svg class="a" style="left:287.5px;top:268px" width="8" height="4"><path d="M0,0 L8,0 L4,4 Z" fill="#505050"/></svg>
<div class="a" style="left:0;top:170px;width:177px;height:18px;background:#eeeeee"></div>
<svg class="a" style="left:4px;top:50px" width="4" height="7" ><use href="#tr" width="4" height="7"/></svg>
<svg class="a" style="left:18px;top:47px" width="14" height="13" ><use href="#folder" width="14" height="13"/></svg>
<div class="t" style="left:39px;top:45px;transform:scaleX(1.000)">C:\</div>
<svg class="a" style="left:17px;top:63px" width="16" height="16" ><use href="#gpkg" width="16" height="16"/></svg>
<div class="t" style="left:39px;top:63px;transform:scaleX(0.953)">GeoPackage</div>
<svg class="a" style="left:17px;top:81px" width="16" height="16" ><use href="#feather" width="16" height="16"/></svg>
<div class="t" style="left:39px;top:81px;transform:scaleX(0.973)">SpatiaLite</div>
<svg class="a" style="left:2px;top:105px" width="8" height="4" ><use href="#td" width="8" height="4"/></svg>
<svg class="a" style="left:17px;top:99px" width="16" height="16" ><use href="#pg" width="16" height="16"/></svg>
<div class="t" style="left:39px;top:99px;transform:scaleX(0.945)">PostgreSQL</div>
<svg class="a" style="left:18px;top:123px" width="8" height="4" ><use href="#td" width="8" height="4"/></svg>
<svg class="a" style="left:36px;top:121px" width="11" height="8" ><use href="#schema" width="11" height="8"/></svg>
<div class="t" style="left:55px;top:117px;transform:scaleX(0.957)">beedatabase</div>
<svg class="a" style="left:34px;top:141px" width="8" height="4" ><use href="#td" width="8" height="4"/></svg>
<svg class="a" style="left:51px;top:137px" width="12" height="12" ><use href="#db" width="12" height="12"/></svg>
<div class="t" style="left:71px;top:135px;transform:scaleX(1.080)">public</div>
<svg class="a" style="left:52px;top:158px" width="4" height="7" ><use href="#tr" width="4" height="7"/></svg>
<svg class="a" style="left:67px;top:154px" width="12" height="13" ><use href="#pts" width="12" height="13"/></svg>
<div class="t" style="left:87px;top:153px;transform:scaleX(0.952)">apiary</div>
<svg class="a" style="left:52px;top:176px" width="4" height="7" ><use href="#tr" width="4" height="7"/></svg>
<svg class="a" style="left:65px;top:173px" width="16" height="11" ><use href="#poly" width="16" height="11"/></svg>
<div class="t" style="left:87px;top:171px;transform:scaleX(1.004)">fields</div>
<svg class="a" style="left:20px;top:194px" width="4" height="7" ><use href="#tr" width="4" height="7"/></svg>
<svg class="a" style="left:36px;top:193px" width="11" height="8" ><use href="#schema" width="11" height="8"/></svg>
<div class="t" style="left:55px;top:189px;transform:scaleX(1.075)">front</div>
<svg class="a" style="left:20px;top:212px" width="4" height="7" ><use href="#tr" width="4" height="7"/></svg>
<svg class="a" style="left:36px;top:211px" width="11" height="8" ><use href="#schema" width="11" height="8"/></svg>
<div class="t" style="left:55px;top:207px;transform:scaleX(0.981)">shop</div>
<svg class="a" style="left:20px;top:230px" width="4" height="7" ><use href="#tr" width="4" height="7"/></svg>
<svg class="a" style="left:36px;top:229px" width="11" height="8" ><use href="#schema" width="11" height="8"/></svg>
<div class="t" style="left:55px;top:225px;transform:scaleX(0.984)">suite</div>
<svg class="a" style="left:17px;top:243px" width="16" height="16" ><use href="#hana" width="16" height="16"/></svg>
<div class="t" style="left:39px;top:243px;transform:scaleX(0.960)">SAP HANA</div>
<svg class="a" style="left:17px;top:262px" width="16" height="15" ><use href="#mssql" width="16" height="15"/></svg>
<div class="t" style="left:39px;top:261px;transform:scaleX(0.917)">MS SQL Server</div>
<svg class="a" style="left:140px;top:279px" width="20" height="3"><rect x="1" y="1" width="1.2" height="1.2" fill="#8a8a8a"/><rect x="4" y="1" width="1.2" height="1.2" fill="#8a8a8a"/><rect x="7" y="1" width="1.2" height="1.2" fill="#8a8a8a"/><rect x="10" y="1" width="1.2" height="1.2" fill="#8a8a8a"/><rect x="13" y="1" width="1.2" height="1.2" fill="#8a8a8a"/><rect x="16" y="1" width="1.2" height="1.2" fill="#8a8a8a"/></svg>
<div class="t" style="left:1px;top:285px;transform:scaleX(0.943)">Layers</div>
<svg class="a" style="left:272px;top:288px" width="26" height="11" viewBox="0 0 26 11"><rect x="0.5" y="0.5" width="10" height="10" rx="2" fill="none" stroke="#6e6e6e"/><rect x="4" y="2.5" width="4.5" height="4.5" fill="none" stroke="#6e6e6e" stroke-width="0.9"/><rect x="2.5" y="4.5" width="4" height="4" fill="#f0f0f0" stroke="#6e6e6e" stroke-width="0.9"/><rect x="14.5" y="0.5" width="10.5" height="10" rx="2" fill="none" stroke="#6e6e6e"/><path d="M16.8,2.8 L22.7,8.2 M22.7,2.8 L16.8,8.2" stroke="#5a5a5a" stroke-width="1.8"/></svg>
<svg class="a" style="left:6px;top:312px" width="15" height="13" ><use href="#brush" width="15" height="13"/></svg>
<svg class="a" style="left:31px;top:310px" width="14" height="16" ><use href="#addgrp" width="14" height="16"/></svg>
<svg class="a" style="left:55px;top:312px" width="18" height="14" ><use href="#eye" width="18" height="14"/></svg>
<svg class="a" style="left:81px;top:310px" width="17" height="16" ><use href="#funneldd" width="17" height="16"/></svg>
<svg class="a" style="left:106px;top:311px" width="16" height="15" ><use href="#eps" width="16" height="15"/></svg>
<svg class="a" style="left:127px;top:317px" width="8" height="4"><path d="M0,0 L7.6,0 L3.8,3.6 Z" fill="#4f4f4f"/></svg>
<svg class="a" style="left:142px;top:309px" width="16" height="16" ><use href="#expand" width="16" height="16"/></svg>
<svg class="a" style="left:167px;top:309px" width="16" height="16" ><use href="#collapse" width="16" height="16"/></svg>
<svg class="a" style="left:193px;top:311px" width="15" height="14" ><use href="#remove" width="15" height="14"/></svg>
<div class="a" style="left:-1px;top:335px;width:300px;height:340px;background:#fff;border:1px solid #a9a9a9"></div>
<svg class="a" style="left:4px;top:342px" width="8" height="4" ><use href="#td" width="8" height="4"/></svg>
<svg class="a" style="left:21px;top:337px" width="14" height="14" ><use href="#chk" width="14" height="14"/></svg>
<svg class="a" style="left:43px;top:337px" width="12" height="13" ><use href="#pts" width="12" height="13"/></svg>
<div class="t" style="left:63px;top:336px;transform:scaleX(0.953);font-weight:bold">Apiary [40]</div>
<svg class="a" style="left:41px;top:357px" width="14" height="14" ><use href="#chk" width="14" height="14"/></svg>
<svg class="a" style="left:65px;top:357px" width="12" height="13"><use href="#hex" width="12" height="13" fill="#b4b792"/><g transform="translate(1.6,1.7) scale(0.73)"><use href="#hex" width="12" height="13" fill="#7b95ad"/></g></svg>
<div class="t" style="left:87px;top:356px;transform:scaleX(0.974)">Buckfast bee [13]</div>
<svg class="a" style="left:41px;top:379px" width="14" height="14" ><use href="#chk" width="14" height="14"/></svg>
<svg class="a" style="left:65px;top:379px" width="12" height="13"><use href="#hex" width="12" height="13" fill="#aaae8a"/><g transform="translate(1.6,1.7) scale(0.73)"><use href="#hex" width="12" height="13" fill="#4d5e49"/></g></svg>
<div class="t" style="left:87px;top:378px;transform:scaleX(0.990)">Carniolan honey bee [20]</div>
<svg class="a" style="left:41px;top:401px" width="14" height="14" ><use href="#chk" width="14" height="14"/></svg>
<svg class="a" style="left:65px;top:401px" width="12" height="13"><use href="#hex" width="12" height="13" fill="#bab98f"/><g transform="translate(1.6,1.7) scale(0.73)"><use href="#hex" width="12" height="13" fill="#9c9a5e"/></g></svg>
<div class="t" style="left:87px;top:400px;transform:scaleX(0.982)">European honey bee [7]</div>
<div class="a" style="left:0;top:419px;width:298px;height:18px;background:#efefef"></div>
<svg class="a" style="left:4px;top:426px" width="8" height="4" ><use href="#td" width="8" height="4"/></svg>
<svg class="a" style="left:21px;top:421px" width="14" height="14" ><use href="#chk" width="14" height="14"/></svg>
<svg class="a" style="left:41px;top:422px" width="16" height="11" ><use href="#poly" width="16" height="11"/></svg>
<div class="t" style="left:63px;top:420px;transform:scaleX(0.959);font-weight:bold">Fields [18]</div>
<div class="a" style="left:63px;top:434px;width:56px;height:1px;background:#000"></div>
<svg class="a" style="left:41px;top:440px" width="14" height="14" ><use href="#chk" width="14" height="14"/></svg>
<svg class="a" style="left:61px;top:438px" width="18" height="18"><rect width="18" height="18" fill="#e6707a"/><circle cx="11" cy="4" r="2.1" fill="#dc5a65"/><circle cx="6" cy="8" r="2.1" fill="#dc5a65"/><circle cx="15.5" cy="8" r="2.1" fill="#dc5a65"/><circle cx="11" cy="12" r="2.1" fill="#dc5a65"/><circle cx="6" cy="15" r="2.1" fill="#dc5a65"/><circle cx="15.5" cy="15" r="2.1" fill="#dc5a65"/><rect x="0.5" y="0.5" width="17" height="17" fill="none" stroke="#dc5a65" stroke-width="1"/></svg>
<div class="t" style="left:85px;top:439px;transform:scaleX(0.978)">Colza [1]</div>
<svg class="a" style="left:41px;top:460px" width="14" height="14" ><use href="#chk" width="14" height="14"/></svg>
<svg class="a" style="left:61px;top:458px" width="18" height="18"><rect width="18" height="18" fill="#f6b48c"/><circle cx="11" cy="4" r="2.1" fill="#f0a578"/><circle cx="6" cy="8" r="2.1" fill="#f0a578"/><circle cx="15.5" cy="8" r="2.1" fill="#f0a578"/><circle cx="11" cy="12" r="2.1" fill="#f0a578"/><circle cx="6" cy="15" r="2.1" fill="#f0a578"/><circle cx="15.5" cy="15" r="2.1" fill="#f0a578"/><rect x="0.5" y="0.5" width="17" height="17" fill="none" stroke="#f0a578" stroke-width="1"/></svg>
<div class="t" style="left:85px;top:459px;transform:scaleX(0.936)">Grass [6]</div>
<svg class="a" style="left:41px;top:480px" width="14" height="14" ><use href="#chk" width="14" height="14"/></svg>
<svg class="a" style="left:61px;top:478px" width="18" height="18"><rect width="18" height="18" fill="#eacbd8"/><circle cx="11" cy="4" r="2.1" fill="#e3c0cf"/><circle cx="6" cy="8" r="2.1" fill="#e3c0cf"/><circle cx="15.5" cy="8" r="2.1" fill="#e3c0cf"/><circle cx="11" cy="12" r="2.1" fill="#e3c0cf"/><circle cx="6" cy="15" r="2.1" fill="#e3c0cf"/><circle cx="15.5" cy="15" r="2.1" fill="#e3c0cf"/><rect x="0.5" y="0.5" width="17" height="17" fill="none" stroke="#e3c0cf" stroke-width="1"/></svg>
<div class="t" style="left:85px;top:479px;transform:scaleX(0.988)">Lavender [4]</div>
<svg class="a" style="left:41px;top:500px" width="14" height="14" ><use href="#chk" width="14" height="14"/></svg>
<svg class="a" style="left:61px;top:498px" width="18" height="18"><rect width="18" height="18" fill="#d1d8e9"/><circle cx="11" cy="4" r="2.1" fill="#c9d0e3"/><circle cx="6" cy="8" r="2.1" fill="#c9d0e3"/><circle cx="15.5" cy="8" r="2.1" fill="#c9d0e3"/><circle cx="11" cy="12" r="2.1" fill="#c9d0e3"/><circle cx="6" cy="15" r="2.1" fill="#c9d0e3"/><circle cx="15.5" cy="15" r="2.1" fill="#c9d0e3"/><rect x="0.5" y="0.5" width="17" height="17" fill="none" stroke="#c9d0e3" stroke-width="1"/></svg>
<div class="t" style="left:85px;top:499px;transform:scaleX(1.000)">Dandelions [5]</div>
<svg class="a" style="left:41px;top:520px" width="14" height="14" ><use href="#chk" width="14" height="14"/></svg>
<svg class="a" style="left:61px;top:518px" width="18" height="18"><rect width="18" height="18" fill="#b8ddc3"/><circle cx="11" cy="4" r="2.1" fill="#acd6b9"/><circle cx="6" cy="8" r="2.1" fill="#acd6b9"/><circle cx="15.5" cy="8" r="2.1" fill="#acd6b9"/><circle cx="11" cy="12" r="2.1" fill="#acd6b9"/><circle cx="6" cy="15" r="2.1" fill="#acd6b9"/><circle cx="15.5" cy="15" r="2.1" fill="#acd6b9"/><rect x="0.5" y="0.5" width="17" height="17" fill="none" stroke="#acd6b9" stroke-width="1"/></svg>
<div class="t" style="left:85px;top:519px;transform:scaleX(0.974)">Weed [2]</div>
<svg class="a" style="left:6px;top:543px" width="4" height="7" ><use href="#tr" width="4" height="7"/></svg>
<svg class="a" style="left:21px;top:539px" width="14" height="14" ><use href="#chk" width="14" height="14"/></svg>
<svg class="a" style="left:43px;top:540px" width="13" height="13" ><use href="#osm" width="13" height="13"/></svg>
<div class="t" style="left:63px;top:538px;transform:scaleX(0.996);font-weight:bold">Online OpenStreetMap</div>
<div class="a" style="left:322px;top:176px;width:400px;height:443px;background:#f0f0f0;border:1px solid #6a6a6a;box-shadow:2px 6px 16px rgba(0,0,0,.30)"></div>
<div class="a" style="left:323px;top:177px;width:398px;height:30px;background:#fff"></div>
<svg class="a" style="left:331px;top:183px" width="16" height="16" ><use href="#qgis" width="16" height="16"/></svg>
<div class="t" style="left:352px;top:183px;transform:scaleX(0.941)">Select a Data Source</div>
<svg class="a" style="left:700.5px;top:186px" width="11" height="11"><path d="M0.5,0.5 L10.5,10.5 M10.5,0.5 L0.5,10.5" stroke="#111" stroke-width="1.1"/></svg>
<svg class="a" style="left:336px;top:218px" width="15" height="16" ><use href="#refresh" width="15" height="16"/></svg>
<svg class="a" style="left:361px;top:218px" width="14" height="16" ><use href="#funnel" width="14" height="16"/></svg>
<svg class="a" style="left:385px;top:216px" width="16" height="16" ><use href="#collapse" width="16" height="16"/></svg>
<div class="a" style="left:327px;top:245px;width:390px;height:304px;background:#fff;border:1px solid #a9a9a9"></div>
<div class="a" style="left:702px;top:246px;width:14px;height:302px;background:#e6e6e6;border-left:1px solid #a9a9a9"></div><div class="a" style="left:703px;top:356px;width:13px;height:130px;background:linear-gradient(to right,#fdfdfd,#efefef);border-top:1px solid #c4c4c4;border-bottom:1px solid #c4c4c4"></div><div class="a" style="left:703px;top:246px;width:13px;height:14px;background:#fafafa;border-bottom:1px solid #c4c4c4"></div><svg class="a" style="left:705.5px;top:250px" width="8" height="4"><path d="M0,4 L4,0 L8,4 Z" fill="#505050"/></svg><div class="a" style="left:703px;top:534px;width:13px;height:14px;background:#fafafa;border-top:1px solid #c4c4c4"></div><svg class="a" style="left:705.5px;top:539px" width="8" height="4"><path d="M0,0 L8,0 L4,4 Z" fill="#505050"/></svg>
<div class="a" style="left:328px;top:354px;width:374px;height:18px;background:#0078d7"></div>
<svg class="a" style="left:347px;top:247px" width="16" height="16" ><use href="#gpkg" width="16" height="16"/></svg>
<div class="t" style="left:369px;top:247px;transform:scaleX(0.953)">GeoPackage</div>
<svg class="a" style="left:347px;top:265px" width="16" height="16" ><use href="#feather" width="16" height="16"/></svg>
<div class="t" style="left:369px;top:265px;transform:scaleX(0.973)">SpatiaLite</div>
<svg class="a" style="left:332px;top:289px" width="8" height="4" ><use href="#td" width="8" height="4"/></svg>
<svg class="a" style="left:347px;top:283px" width="16" height="16" ><use href="#pg" width="16" height="16"/></svg>
<div class="t" style="left:369px;top:283px;transform:scaleX(0.945)">PostgreSQL</div>
<svg class="a" style="left:348px;top:307px" width="8" height="4" ><use href="#td" width="8" height="4"/></svg>
<svg class="a" style="left:366px;top:305px" width="11" height="8" ><use href="#schema" width="11" height="8"/></svg>
<div class="t" style="left:385px;top:301px;transform:scaleX(0.957)">beedatabase</div>
<svg class="a" style="left:364px;top:325px" width="8" height="4" ><use href="#td" width="8" height="4"/></svg>
<svg class="a" style="left:381px;top:321px" width="12" height="12" ><use href="#db" width="12" height="12"/></svg>
<div class="t" style="left:401px;top:319px;transform:scaleX(1.080)">public</div>
<svg class="a" style="left:397px;top:336px" width="12" height="13" ><use href="#pts" width="12" height="13"/></svg>
<div class="t" style="left:417px;top:337px;transform:scaleX(0.952)">apiary</div>
<svg class="a" style="left:395px;top:357px" width="16" height="11"><use href="#poly" width="16" height="11" fill="#fff"/></svg>
<div class="t" style="left:417px;top:355px;transform:scaleX(1.004);color:#fff">fields</div>
<svg class="a" style="left:350px;top:378px" width="4" height="7" ><use href="#tr" width="4" height="7"/></svg>
<svg class="a" style="left:366px;top:377px" width="11" height="8" ><use href="#schema" width="11" height="8"/></svg>
<div class="t" style="left:385px;top:373px;transform:scaleX(1.075)">front</div>
<svg class="a" style="left:366px;top:395px" width="11" height="8" ><use href="#schema" width="11" height="8"/></svg>
<div class="t" style="left:385px;top:391px;transform:scaleX(0.981)">shop</div>
<svg class="a" style="left:350px;top:414px" width="4" height="7" ><use href="#tr" width="4" height="7"/></svg>
<svg class="a" style="left:366px;top:413px" width="11" height="8" ><use href="#schema" width="11" height="8"/></svg>
<div class="t" style="left:385px;top:409px;transform:scaleX(0.984)">suite</div>
<svg class="a" style="left:347px;top:427px" width="16" height="16" ><use href="#hana" width="16" height="16"/></svg>
<div class="t" style="left:369px;top:427px;transform:scaleX(0.960)">SAP HANA</div>
<svg class="a" style="left:347px;top:445px" width="16" height="15" ><use href="#mssql" width="16" height="15"/></svg>
<div class="t" style="left:369px;top:445px;transform:scaleX(0.917)">MS SQL Server</div>
<svg class="a" style="left:347px;top:465px" width="16" height="12" ><use href="#oracle" width="16" height="12"/></svg>
<div class="t" style="left:369px;top:463px;transform:scaleX(0.969)">Oracle</div>
<svg class="a" style="left:347px;top:481px" width="16" height="16" ><use href="#arcgis" width="16" height="16"/></svg>
<div class="t" style="left:369px;top:481px;transform:scaleX(0.871)">ArcGIS REST Servers</div>
<svg class="a" style="left:334px;top:503px" width="4" height="7" ><use href="#tr" width="4" height="7"/></svg>
<svg class="a" style="left:347px;top:499px" width="16" height="16" ><use href="#mergin" width="16" height="16"/></svg>
<div class="t" style="left:369px;top:499px;transform:scaleX(1.029)">Mergin Maps</div>
<svg class="a" style="left:334px;top:521px" width="4" height="7" ><use href="#tr" width="4" height="7"/></svg>
<svg class="a" style="left:347px;top:520px" width="16" height="11" ><use href="#cloud" width="16" height="11"/></svg>
<div class="t" style="left:369px;top:517px;transform:scaleX(0.994)">QFieldCloud</div>
<div class="a" style="left:328px;top:534px;width:374px;height:14px;overflow:hidden">
<svg class="a" style="left:6px;top:5px" width="4" height="7" ><use href="#tr" width="4" height="7"/></svg>
<svg class="a" style="left:19px;top:2px" width="16" height="16" ><use href="#wms" width="16" height="16"/></svg>
<div class="t" style="left:40px;top:1px;transform:scaleX(0.968)">WMS/WMTS</div>
</div>
<svg class="a" style="left:431px;top:367px" width="13" height="20" viewBox="0 0 13 20"><path d="M0.5,0.5 L0.5,15.5 L4,12.2 L6.5,18.5 L9,17.5 L6.6,11.3 L11.5,11.3 Z" fill="#fff" stroke="#000" stroke-width="1" stroke-linejoin="round"/></svg>
<div class="t" style="left:330px;top:555px;transform:scaleX(0.887)">Original source URI:</div>
<div class="t" style="left:429px;top:555px;transform:scaleX(0.910);color:#0000ff">C:/Users/david/Desktop/simple-bee-farming/bees.gpkg</div>
<div class="a" style="left:430px;top:570px;width:264px;height:1px;background:#0000ff"></div>
<div class="a" style="left:695px;top:559px;width:1px;height:13px;background:#000"></div>
<div class="t" style="left:330px;top:568px;transform:scaleX(0.917)">layername=area</div>
<div class="a" style="left:551px;top:593px;width:80px;height:21px;background:linear-gradient(#f2f6fb,#e4ecf5);border:1px solid #3c9be8;border-radius:3px"></div>
<div class="t" style="left:583px;top:595px;transform:scaleX(0.794)">OK</div>
<div class="a" style="left:637px;top:593px;width:80px;height:21px;background:linear-gradient(#f6f6f6,#e9e9e9);border:1px solid #b3b3b3;border-radius:3px"></div>
<div class="t" style="left:660px;top:595px;transform:scaleX(0.875)">Cancel</div>
</body></html>
